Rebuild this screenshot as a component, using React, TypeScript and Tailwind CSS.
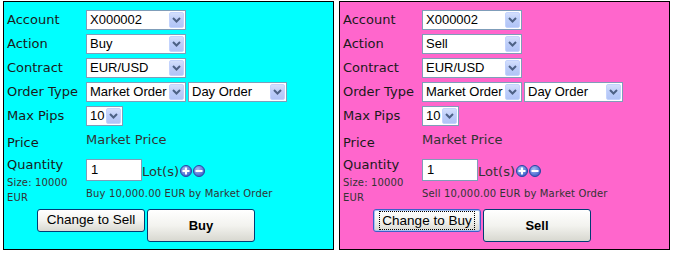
import React from "react";

const Chevron = () => (
  <svg width="9" height="6" viewBox="0 0 9 6">
    <path d="M1 1 L4.5 4.5 L8 1" fill="none" stroke="#4d6185" strokeWidth="2" />
  </svg>
);

function Select({ value, width }: { value: string; width: number }) {
  return (
    <div
      className="flex h-[20px] items-center border border-[#7f9db9] bg-white p-[1px]"
      style={{ width }}
    >
      <span className="min-w-0 flex-1 whitespace-nowrap pl-[2px] font-['Liberation_Sans',Arial,sans-serif] text-[13px] leading-[16px] text-black">
        {value}
      </span>
      <div className="flex h-[16px] w-[15px] shrink-0 items-center justify-center rounded-[2px] border border-[#c3d3fd] bg-gradient-to-b from-[#d4dffc] via-[#bccdf9] to-[#b1c4f6]">
        <Chevron />
      </div>
    </div>
  );
}

function CircleIcon({ minus }: { minus?: boolean }) {
  const id = minus ? "gm" : "gp";
  return (
    <svg width="12" height="12" viewBox="0 0 12 12">
      <defs>
        <radialGradient id={id} cx="0.4" cy="0.35" r="0.7">
          <stop offset="0" stopColor="#a9bff5" />
          <stop offset="1" stopColor="#3458c8" />
        </radialGradient>
      </defs>
      <circle cx="6" cy="6" r="5.5" fill={`url(#${id})`} stroke="#2a46a0" strokeWidth="1" />
      <rect x="2.5" y="5" width="7" height="2" fill="#fff" />
      {!minus && <rect x="5" y="2.5" width="2" height="7" fill="#fff" />}
    </svg>
  );
}

function Panel({
  bg,
  action,
  other,
  focused,
}: {
  bg: string;
  action: string;
  other: string;
  focused?: boolean;
}) {
  const label = "w-[79px] shrink-0 text-[13px] leading-[16px] text-[#1a1a1a]";
  const small = "text-[10px] tracking-[0.15px] text-[#333]";
  return (
    <div
      className={`flex h-[249px] w-[331px] flex-col border border-black px-[3px] pt-[6px] font-['DejaVu_Sans',Verdana,sans-serif] ${bg}`}
    >
      <div className="flex h-[24px] items-center">
        <div className={label}>Account</div>
        <Select value="X000002" width={100} />
      </div>
      <div className="flex h-[24px] items-center">
        <div className={label}>Action</div>
        <Select value={action} width={100} />
      </div>
      <div className="flex h-[24px] items-center">
        <div className={label}>Contract</div>
        <Select value="EUR/USD" width={100} />
      </div>
      <div className="flex h-[24px] items-center">
        <div className={`${label} whitespace-nowrap`}>Order Type</div>
        <div className="flex gap-[2px]">
          <Select value="Market Order" width={100} />
          <Select value="Day Order" width={99} />
        </div>
      </div>
      <div className="flex h-[24px] items-center">
        <div className={label}>Max Pips</div>
        <Select value="10" width={37} />
      </div>
      <div className="flex h-[26px] items-start">
        <div className={`${label} pt-[7px]`}>Price</div>
        <div className="pt-[4px] text-[13px] leading-[16px] text-[#333]">Market Price</div>
      </div>
      <div className="flex h-[52px] items-start">
        <div className="w-[79px] shrink-0 pt-[3px]">
          <div className="text-[13px] leading-[16px] text-[#1a1a1a]">Quantity</div>
          <div className={`mt-[2px] leading-[15px] ${small}`}>Size: 10000</div>
          <div className={`leading-[15px] ${small}`}>EUR</div>
        </div>
        <div className="pt-[5px]">
          <div className="flex h-[22px] items-center">
            <div className="flex h-[22px] w-[56px] items-center border border-[#7f9db9] bg-white pl-[4px] font-['Liberation_Sans',Arial,sans-serif] text-[13px] text-black">
              1
            </div>
            <span className="pt-[3px] text-[13px] leading-[16px] text-[#333]">Lot(s)</span>
            <div className="ml-[1px] flex gap-[1px] pt-[2px]">
              <CircleIcon />
              <CircleIcon minus />
            </div>
          </div>
          <div className={`mt-[6px] whitespace-nowrap leading-[14px] ${small}`}>
            {action} 10,000.00 EUR by Market Order
          </div>
        </div>
      </div>
      <div className="ml-[30px] mt-[3px] flex items-start gap-[2px] font-['Liberation_Sans',Arial,sans-serif]">
        <button
          className={`flex h-[23px] w-[108px] items-center justify-center rounded-[3px] border bg-gradient-to-b from-[#ffffff] via-[#f3f3ef] to-[#d8d8d0] text-[13.5px] text-black ${
            focused ? "border-[#3c5fc8] shadow-[inset_0_0_0_1px_#a8c0f0]" : "border-[#003c74]"
          }`}
        >
          {focused ? (
            <span className="border border-dotted border-black px-[2px] leading-[17px]">{other}</span>
          ) : (
            other
          )}
        </button>
        <button className="flex h-[33px] w-[108px] items-center justify-center rounded-[3px] border border-[#003c74] bg-gradient-to-b from-[#ffffff] via-[#f3f3ef] to-[#d8d8d0] text-[13px] font-bold text-black">
          {action}
        </button>
      </div>
    </div>
  );
}

export default function App() {
  return (
    <div className="flex h-[256px] w-[676px] gap-[5px] bg-white pl-[3px] pt-[1px]">
      <Panel bg="bg-[#00ffff]" action="Buy" other="Change to Sell" />
      <Panel bg="bg-[#ff66cc]" action="Sell" other="Change to Buy" focused />
    </div>
  );
}
